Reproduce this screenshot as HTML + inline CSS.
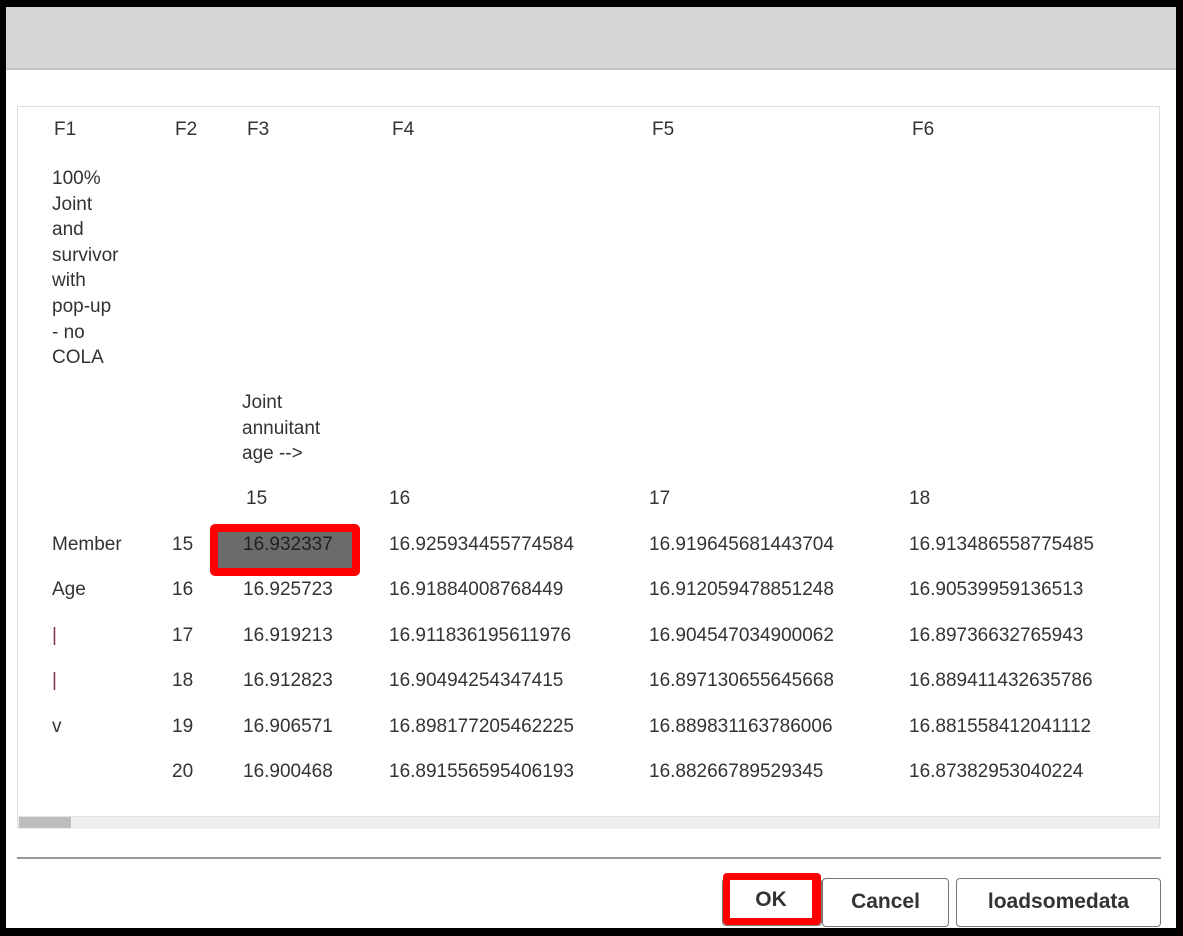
<!DOCTYPE html>
<html><head><meta charset="utf-8"><style>
body{margin:0;width:1183px;height:936px;background:#000;position:relative;overflow:hidden;font-family:"Liberation Sans",sans-serif;color:#333;font-size:19px}
.win{position:absolute;left:6px;top:7px;width:1170px;height:921px;background:#fff}
.hdr{position:absolute;left:6px;top:7px;width:1170px;height:61px;background:#d6d6d6;border-bottom:2px solid #c4c4c4}
.panel{position:absolute;left:17px;top:106px;width:1143px;height:722px;border:1px solid #ddd;box-sizing:border-box}
.t{position:absolute;white-space:nowrap;line-height:25.6px}
.sb{position:absolute;left:18px;top:816px;width:1141px;height:12px;background:#eee;border-top:1px solid #e2e2e2}
.th{position:absolute;left:19px;top:817px;width:52px;height:11px;background:#bdbdbd}
.sep{position:absolute;left:17px;top:857px;width:1144px;height:2px;background:#999}
.btn{position:absolute;border:1px solid #777;border-radius:4px;background:#fff;font-weight:bold;font-size:21px;text-align:center;box-sizing:border-box;line-height:46px}
</style></head><body>
<div class="win"></div><div class="hdr"></div>
<div class="panel"></div>
<div class="t" style="left:54px;top:117px">F1</div>
<div class="t" style="left:175px;top:117px">F2</div>
<div class="t" style="left:247px;top:117px">F3</div>
<div class="t" style="left:392px;top:117px">F4</div>
<div class="t" style="left:652px;top:117px">F5</div>
<div class="t" style="left:912px;top:117px">F6</div>
<div class="t" style="left:52px;top:166px">100%<br>Joint<br>and<br>survivor<br>with<br>pop-up<br>- no<br>COLA</div>
<div class="t" style="left:242px;top:390px">Joint<br>annuitant<br>age --&gt;</div>
<div class="t" style="left:246px;top:486px">15</div>
<div class="t" style="left:389px;top:486px">16</div>
<div class="t" style="left:649px;top:486px">17</div>
<div class="t" style="left:909px;top:486px">18</div>
<div style="position:absolute;left:210px;top:524px;width:150px;height:52px;background:#f00;border-radius:5px"></div>
<div style="position:absolute;left:218px;top:532px;width:134px;height:36px;background:#6b6b6b"></div>
<div class="t" style="left:52px;top:532px">Member</div>
<div class="t" style="left:52px;top:577px">Age</div>
<div class="t" style="left:52px;top:623px;color:#7a3050">|</div>
<div class="t" style="left:52px;top:668px;color:#7a3050">|</div>
<div class="t" style="left:52px;top:714px">v</div>
<div class="t" style="left:172px;top:532px">15<br></div>
<div class="t" style="left:172px;top:577px">16</div>
<div class="t" style="left:172px;top:623px">17</div>
<div class="t" style="left:172px;top:668px">18</div>
<div class="t" style="left:172px;top:714px">19</div>
<div class="t" style="left:172px;top:759px">20</div>
<div class="t" style="left:243px;top:532px;color:#222">16.932337</div>
<div class="t" style="left:243px;top:577px">16.925723</div>
<div class="t" style="left:243px;top:623px">16.919213</div>
<div class="t" style="left:243px;top:668px">16.912823</div>
<div class="t" style="left:243px;top:714px">16.906571</div>
<div class="t" style="left:243px;top:759px">16.900468</div>
<div class="t" style="left:389px;top:532px">16.925934455774584</div>
<div class="t" style="left:389px;top:577px">16.91884008768449</div>
<div class="t" style="left:389px;top:623px">16.911836195611976</div>
<div class="t" style="left:389px;top:668px">16.90494254347415</div>
<div class="t" style="left:389px;top:714px">16.898177205462225</div>
<div class="t" style="left:389px;top:759px">16.891556595406193</div>
<div class="t" style="left:649px;top:532px">16.919645681443704</div>
<div class="t" style="left:649px;top:577px">16.912059478851248</div>
<div class="t" style="left:649px;top:623px">16.904547034900062</div>
<div class="t" style="left:649px;top:668px">16.897130655645668</div>
<div class="t" style="left:649px;top:714px">16.889831163786006</div>
<div class="t" style="left:649px;top:759px">16.88266789529345</div>
<div class="t" style="left:909px;top:532px">16.913486558775485</div>
<div class="t" style="left:909px;top:577px">16.90539959136513</div>
<div class="t" style="left:909px;top:623px">16.89736632765943</div>
<div class="t" style="left:909px;top:668px">16.889411432635786</div>
<div class="t" style="left:909px;top:714px">16.881558412041112</div>
<div class="t" style="left:909px;top:759px">16.87382953040224</div>
<div class="sb"></div><div class="th"></div>
<div class="sep"></div>
<div class="btn" style="left:722px;top:878px;width:100px;height:48px;border-color:#777"></div>
<div style="position:absolute;left:723px;top:873px;width:98px;height:52px;background:#f00;border-radius:4px"></div>
<div class="btn" style="left:730px;top:880px;width:82px;height:38px;border:none;border-radius:0;line-height:40px">OK</div>
<div class="btn" style="left:822px;top:878px;width:127px;height:49px">Cancel</div>
<div class="btn" style="left:956px;top:878px;width:205px;height:49px">loadsomedata</div>
</body></html>
